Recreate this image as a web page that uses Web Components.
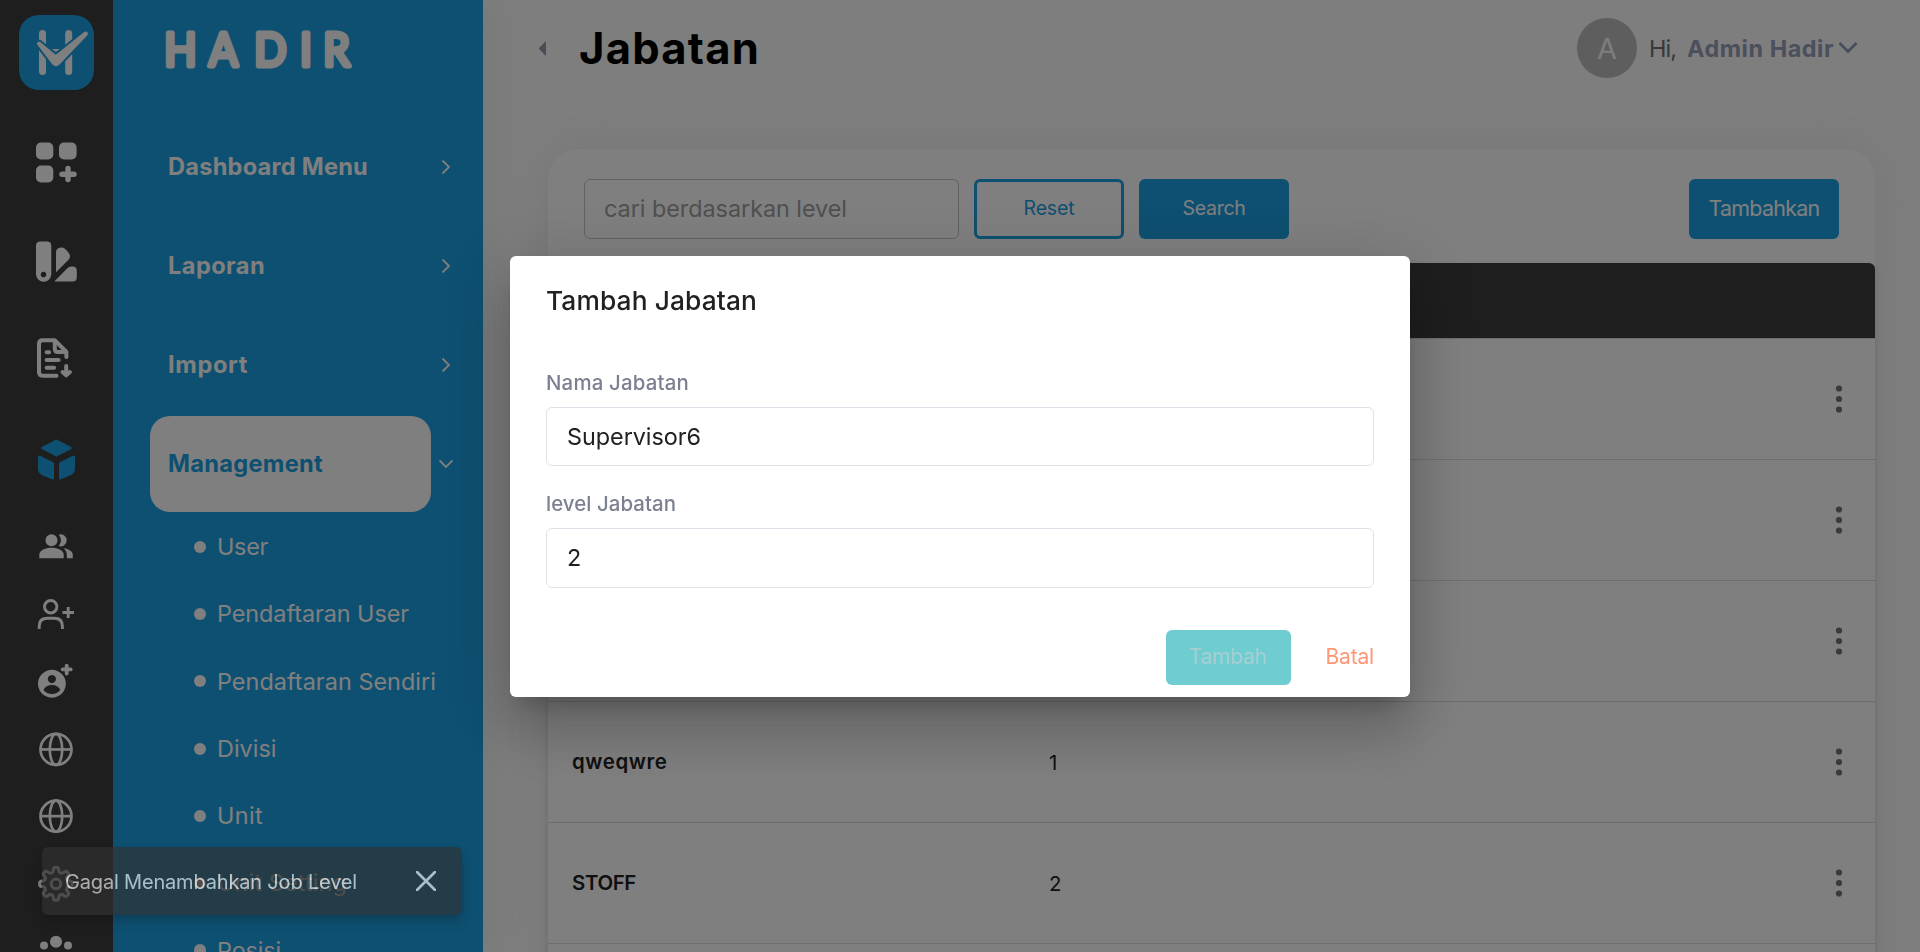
<!DOCTYPE html>
<html lang="id">
<head>
<meta charset="utf-8">
<title>Jabatan - Hadir</title>
<style>
html,body{margin:0;height:100%;overflow:hidden;background:#fcfcfc}
body{font-family:Inter,"Open Sans",sans-serif;color:#212121}
</style>
</head>
<body>
<hadir-app></hadir-app>
<script>
const define=(name,html,setup)=>customElements.define(name,class extends HTMLElement{
  constructor(){super();this.attachShadow({mode:'open'});}
  connectedCallback(){
    this.shadowRoot.innerHTML=typeof html==='function'?html(this):html;
    if(setup)setup(this);
  }
});

/* Text tracked to an exact advance width */
define('fit-text','<style>:host{display:inline-block;white-space:pre;flex:none;line-height:1.21}:host([dn]){padding-top:2px}span{display:inline-block}</style><span><slot></slot></span>',el=>{
  const s=el.shadowRoot.querySelector('span');
  const w=+el.getAttribute('w'),n=el.textContent.length;
  if(!w)return;
  const nat=s.getBoundingClientRect().width;
  s.style.letterSpacing=((w-nat)/n).toFixed(3)+'px';
});

/* Rail icons share one box, drawn in rail coordinates */
const globe=cy=>`<g fill="none" stroke="#fff" stroke-width="2.700"><circle cx="56" cy="${cy}" r="15.500"/><ellipse cx="56" cy="${cy}" rx="6.200" ry="15.500"/><path d="M40.500 ${cy}h31"/></g>`;
const gear=(()=>{let d='';const N=160;for(let i=0;i<=N;i++){const a=i/N*Math.PI*2;const c=Math.cos(8*a);const r=14.1+2.3*Math.tanh(2.2*c)/Math.tanh(2.2);d+=(i?'L':'M')+(56+r*Math.sin(a)).toFixed(2)+' '+(884-r*Math.cos(a)).toFixed(2);}return d+'Z';})();
const ICONS={
 grid:[161.5,`<g fill="#fff"><rect x="36" y="142" width="17.3" height="17" rx="5"/><rect x="59" y="142" width="17.6" height="17" rx="5"/><rect x="36" y="165" width="17.3" height="17" rx="5"/></g><path d="M68 168v11M62 173.8h12" stroke="#fff" stroke-width="5.4" stroke-linecap="round"/>`],
 swatch:[260.5,`<g fill="#fff"><path fill-rule="evenodd" d="M40.500 241h6.500q4.300 0 4.300 4.300v28.200a7.600 7.600 0 0 1-15.300 0v-28.200q0-4.300 4.500-4.300zM43.500 271.300a2.800 2.800 0 1 0 .01 0z"/><path d="M56 271.800V251.500q0-2.600 2.300-3.700c2.700-1.400 5.300-1 7.200 1l3 3.200c1.900 2.200 2 5 0 7.200z"/><path d="M54.300 281l13-13.200q1.700-1.800 4-1.800h1.200q4.300 0 4.300 4.300v6.400q0 4.300-4.300 4.300z"/></g>`],
 doc:[359.5,`<g fill="none" stroke="#fff" stroke-width="4" stroke-linecap="round" stroke-linejoin="round"><path d="M56.500 375.200H42.700q-3.700 0-3.700-3.700v-28q0-3.700 3.700-3.700h12.200l11.500 11.700v5"/><path d="M54.800 341v7.500q0 3 3 3h7.600"/><path d="M46.600 351.700h2.500M46.600 359.500h12M46.600 367.300h7.500M66.200 365.500v8M62.500 371.500l3.700 3.400 3.700-3.400"/></g>`],
 cube:[458.5,`<g fill="#1ca0e2" stroke="#1ca0e2" stroke-width="3" stroke-linejoin="round"><path d="M42.800 447.500L56.500 440.500L70.200 447.500L56.500 454.500Z"/><path d="M39.500 456.500L52.500 463V477.500L43 473.300Q39.500 471.500 39.500 468.500Z"/><path d="M73.500 456.500L60.500 463V477.500L70 473.300Q73.500 471.500 73.500 468.500Z"/></g>`],
 people:[546.650,`<g fill="#fff"><circle cx="51.500" cy="540" r="6"/><path d="M39.300 558v-3.600c0-4.400 6.500-6.900 12.200-6.900s12.200 2.500 12.200 6.900v3.600z"/><path d="M58.800 534.300a6 6 0 1 1 0 11.400a8.500 8.500 0 0 0 0-11.400z"/><path d="M63.500 547.900c5 .8 9.300 3 9.300 6.500v3.600h-6v-3.600c0-2.800-1.300-4.900-3.300-6.500z"/></g>`],
 useradd:[613.950,`<g fill="none" stroke="#fff" stroke-width="2.900"><circle cx="50.700" cy="606.700" r="6.200"/><path d="M39.200 629v-2.800q0-8 8-8h7.200q8 0 8 8v2.800"/><path d="M68.200 607v11M62.500 612.500h11.500"/></g>`],
 account:[681.250,`<path fill="#fff" fill-rule="evenodd" d="M51.900 670a14 14 0 1 0 .01 0zM51.900 675.200a4.100 4.100 0 1 1-.01 0zM43.500 690.200c1.400-3.400 4.600-4.900 8.400-4.900s7 1.500 8.400 4.900a10.700 10.700 0 0 1-16.800 0z"/><path d="M66.700 665.800v8M62.700 669.700h8" stroke="#fff" stroke-width="3.800" stroke-linecap="round"/>`],
 globe1:[748.550,globe(749)],
 globe2:[815.850,globe(816)],
 gear:[883.150,`<g fill="none" stroke="#fff" stroke-width="3"><path d="${gear}"/><circle cx="56" cy="884" r="4.800"/></g>`],
 team:[950.450,`<g fill="#fff"><circle cx="56" cy="942.300" r="6"/><circle cx="44" cy="946" r="4"/><circle cx="68" cy="946" r="4"/></g>`]
};
define('rail-icon',el=>{const [cy,art]=ICONS[el.getAttribute('name')];
 return `<style>:host{display:flex;align-items:center;justify-content:center;height:67.3px;flex:none}:host([big]){height:99px}svg{display:block}</style><svg width="47" height="48" viewBox="33 ${cy-24} 47 48">${art}</svg>`;});

define('icon-rail',`<style>:host{display:block;background:#3c3c3c;height:100%;overflow:hidden}
.logo{height:112px;box-sizing:border-box;padding:15px 0 0 19px}.logo svg{display:block}.small{padding-top:5px}</style>
<div class="logo"><svg width="75" height="75" viewBox="19 15 75 75"><rect x="19" y="15" width="75" height="75" rx="20" fill="#1ca0e2"/>
<path d="M42.500 33.500v38M68.700 33.500v38" stroke="#fff" stroke-width="7" stroke-linecap="round"/>
<path d="M51 49h9.500l-4.700 3.300z" fill="#fff"/>
<path d="M37 44.300Q36.500 41.300 40 41.800L55.800 54.800L84.500 31.700Q87.500 30.700 88 33.500Q87.700 35 86.500 36.200L60 64Q56 68.500 52 64Z" fill="#fff" stroke="#1ca0e2" stroke-width="4" paint-order="stroke"/></svg></div>
<rail-icon big name="grid"></rail-icon><rail-icon big name="swatch"></rail-icon><rail-icon big name="doc"></rail-icon><rail-icon big name="cube"></rail-icon>
<div class="small"><rail-icon name="people"></rail-icon><rail-icon name="useradd"></rail-icon><rail-icon name="account"></rail-icon><rail-icon name="globe1"></rail-icon><rail-icon name="globe2"></rail-icon><rail-icon name="gear"></rail-icon><rail-icon name="team"></rail-icon></div>`);

define('nav-item',`<style>:host{display:flex;height:99px;align-items:center;justify-content:space-between;padding:0 30px 0 37px;flex:none;color:#fff;font-weight:700;font-size:23.600px}
.pill{width:281px;height:96px;box-sizing:border-box;padding-left:18px;display:flex;align-items:center;border-radius:20px}
:host([active]) .pill{background:#fff;color:#1ca0e2}svg{flex:none}:host([active]) svg{transform:rotate(90deg)}</style>
<div class="pill"><slot></slot></div><svg width="14" height="14" viewBox="0 0 14 14" fill="none" stroke="#fff" stroke-width="1.800"><path d="M3.500 .5L10 7L3.500 13.500"/></svg>`);
define('sub-item',`<style>:host{display:flex;height:67.300px;align-items:center;padding-left:81px;gap:11px;color:#fff;font-size:23.400px;flex:none}i{width:12px;height:12px;border-radius:50%;background:#fff}::slotted(*){padding-top:1px}</style><i></i><slot></slot>`);
define('side-nav',`<style>:host{display:block;background:#1ca0e2;height:100%;overflow:hidden;box-shadow:0 0 45px rgba(0,80,50,.09)}
.brand{height:117px}.brand svg{display:block}text{font:400 46px Lato,sans-serif;fill:#fff;stroke:#fff;stroke-width:5;stroke-linejoin:round}</style>
<div class="brand"><svg width="370" height="100" viewBox="113 0 370 100"><g transform="scale(.92 1)"><text x="178.600 227.200 276.500 326.200 351.500" y="66.400">HADIR</text></g></svg></div>
<nav-item><fit-text dn w="200">Dashboard Menu</fit-text></nav-item>
<nav-item><fit-text dn w="97">Laporan</fit-text></nav-item>
<nav-item><fit-text dn w="80">Import</fit-text></nav-item>
<nav-item active><fit-text dn w="155">Management</fit-text></nav-item>
<sub-item><fit-text w="51">User</fit-text></sub-item>
<sub-item><fit-text w="192">Pendaftaran User</fit-text></sub-item>
<sub-item><fit-text w="219">Pendaftaran Sendiri</fit-text></sub-item>
<sub-item><fit-text w="59.500">Divisi</fit-text></sub-item>
<sub-item><fit-text w="46">Unit</fit-text></sub-item>
<sub-item><fit-text w="130">Unit Setting</fit-text></sub-item>
<sub-item><fit-text w="64">Posisi</fit-text></sub-item>`);

define('page-header',`<style>:host{display:flex;height:96px;align-items:center;padding:0 62px 0 56px}
h1{margin:0 auto 0 32px;font-size:43.500px;font-weight:700;color:#000;display:flex}
.av{width:60px;height:60px;border-radius:50%;background:#bdbdbd;color:#fafafa;font-size:29px;display:flex;align-items:center;justify-content:center;margin-right:12px}
.hi{font-size:23.400px;color:#6d757b;margin-right:11px}.name{font-size:23.400px;font-weight:700;color:#989fb8;margin-right:4px}</style>
<svg width="8" height="15" viewBox="0 0 8 15"><path d="M7 0V15L-.5 7.500Z" fill="#929bad"/></svg>
<h1><fit-text w="181">Jabatan</fit-text></h1>
<div class="av">A</div><fit-text dn class="hi" w="27">Hi,</fit-text><fit-text dn class="name" w="147">Admin Hadir</fit-text>
<svg width="20" height="14" viewBox="0 0 20 14"><path d="M1.500 2L10 10.500L18.500 2" fill="none" stroke="#8f98b5" stroke-width="2.600"/></svg>`);

define('ui-button',`<style>:host{display:flex;width:150px;height:60px;box-sizing:border-box;align-items:center;justify-content:center;border-radius:6px;background:#1ca0e2;color:#fff;font-size:19.500px}
:host([outline]){background:none;border:3px solid #1ca0e2;color:#1ca0e2}:host([large]){font-size:21.400px}</style><slot></slot>`);
define('table-row',`<style>:host{display:grid;grid-template-columns:477px 1fr 75px;height:121px;box-sizing:border-box;border-bottom:1px solid #dcdcdc;align-items:center;padding-left:24px;font-size:20.400px;color:#212121}
.k{font-weight:600}svg{display:block}</style><div class="k"><slot></slot></div><div><slot name="level"></slot></div>
<svg width="8" height="28" viewBox="-4 -14 8 28" style="margin-left:35px" fill="#757575"><circle cy="-10.500" r="3.100"/><circle r="3.100"/><circle cy="10.500" r="3.100"/></svg>`);
define('data-card',`<style>:host{display:block;margin:53px 45px 0 65px;background:#fff;border-radius:30px 30px 0 0;box-shadow:0 0 45px rgba(0,80,50,.085);height:900px}
.bar{display:flex;gap:15px;padding:30px 36px 24px}.search{width:375px;height:60px;box-sizing:border-box;border:1px solid #c4c4c4;border-radius:6px;display:flex;align-items:center;padding-left:19px;color:#a0a0a0;font-size:23.400px}
ui-button:last-child{margin-left:auto}.table{box-shadow:0 3px 6px rgba(0,0,0,.12);border-radius:6px 6px 0 0}.head{height:75px;background:#3c3c3c;border-bottom:1px solid #dcdcdc;border-radius:6px 6px 0 0}</style>
<div class="bar"><div class="search"><fit-text w="243">cari berdasarkan level</fit-text></div>
<ui-button outline><fit-text w="51">Reset</fit-text></ui-button><ui-button><fit-text w="63">Search</fit-text></ui-button><ui-button large><fit-text w="111">Tambahkan</fit-text></ui-button></div>
<div class="table"><div class="head"></div><table-row></table-row><table-row></table-row><table-row></table-row>
<table-row><fit-text w="95.500">qweqwre</fit-text><span slot="level">1</span></table-row>
<table-row><fit-text w="64">STOFF</fit-text><span slot="level">2</span></table-row><table-row></table-row></div>`);

define('form-field',`<style>:host{display:block}.l{height:48px;display:flex;align-items:center;color:#7b8190;font-size:20.400px;font-weight:500}
.f{height:60px;box-sizing:border-box;border:1px solid #dde1e8;border-radius:6px;display:flex;align-items:center;padding-left:20px;color:#212121;font-size:23.400px}:host([short]) .f{height:59px}</style>
<div class="l"><slot name="label"></slot></div><div class="f"><slot></slot></div>`);
define('modal-dialog',`<style>:host{position:fixed;inset:0;background:rgba(0,0,0,.5);display:flex;align-items:center;justify-content:center}
.box{width:900px;height:441px;box-sizing:border-box;padding:0 36px;background:#fff;border-radius:6px;box-shadow:0 16.500px 22.500px -10.500px rgba(0,0,0,.2),0 36px 57px 4.500px rgba(0,0,0,.14),0 13.500px 69px 12px rgba(0,0,0,.12)}
.t{height:89px;margin-bottom:14px;display:flex;align-items:center;font-size:26.300px;font-weight:500;color:#212121}.gap{height:14px}
.a{display:flex;justify-content:flex-end;gap:35px;margin-top:42px;font-size:21px}.ok{width:125px;height:55px;border-radius:6px;background:#6fcdd2;color:#a6cfd1;display:flex;align-items:center;justify-content:center}.no{color:#ff9777;height:55px;display:flex;align-items:center}</style>
<div class="box"><div class="t"><fit-text dn w="211">Tambah Jabatan</fit-text></div>
<form-field short><fit-text dn slot="label" w="143">Nama Jabatan</fit-text><fit-text dn w="134">Supervisor6</fit-text></form-field><div class="gap"></div>
<form-field><fit-text dn slot="label" w="130">level Jabatan</fit-text>2</form-field>
<div class="a"><div class="ok"><fit-text w="78">Tambah</fit-text></div><div class="no"><fit-text w="48.500">Batal</fit-text></div></div></div>`);
define('snack-bar',`<style>:host{position:fixed;left:42px;top:847px;width:420px;height:68px;box-sizing:border-box;padding:0 26px 0 23px;display:flex;align-items:center;justify-content:space-between;background:#313131;border-radius:6px;opacity:.64;color:#fff;font-size:20px;box-shadow:0 4px 8px -1px rgba(0,0,0,.25),0 8px 15px rgba(0,0,0,.16)}svg{display:block}</style>
<fit-text dn w="292">Gagal Menambahkan Job Level</fit-text><svg width="20" height="20" viewBox="0 0 20 20"><path d="M1 1L19 19M19 1L1 19" stroke="#fff" stroke-width="2.700" stroke-linecap="round"/></svg>`);
define('hadir-app',`<style>:host{display:grid;grid-template-columns:113px 370px 1fr;height:100vh;overflow:hidden;background:#fcfcfc}main{min-width:0;overflow:hidden}side-nav{position:relative;z-index:1}icon-rail{position:relative;z-index:2}modal-dialog{z-index:5}snack-bar{z-index:6}</style>
<icon-rail></icon-rail><side-nav></side-nav><main><page-header></page-header><data-card></data-card></main><modal-dialog></modal-dialog><snack-bar></snack-bar>`);
</script>
</body>
</html>
